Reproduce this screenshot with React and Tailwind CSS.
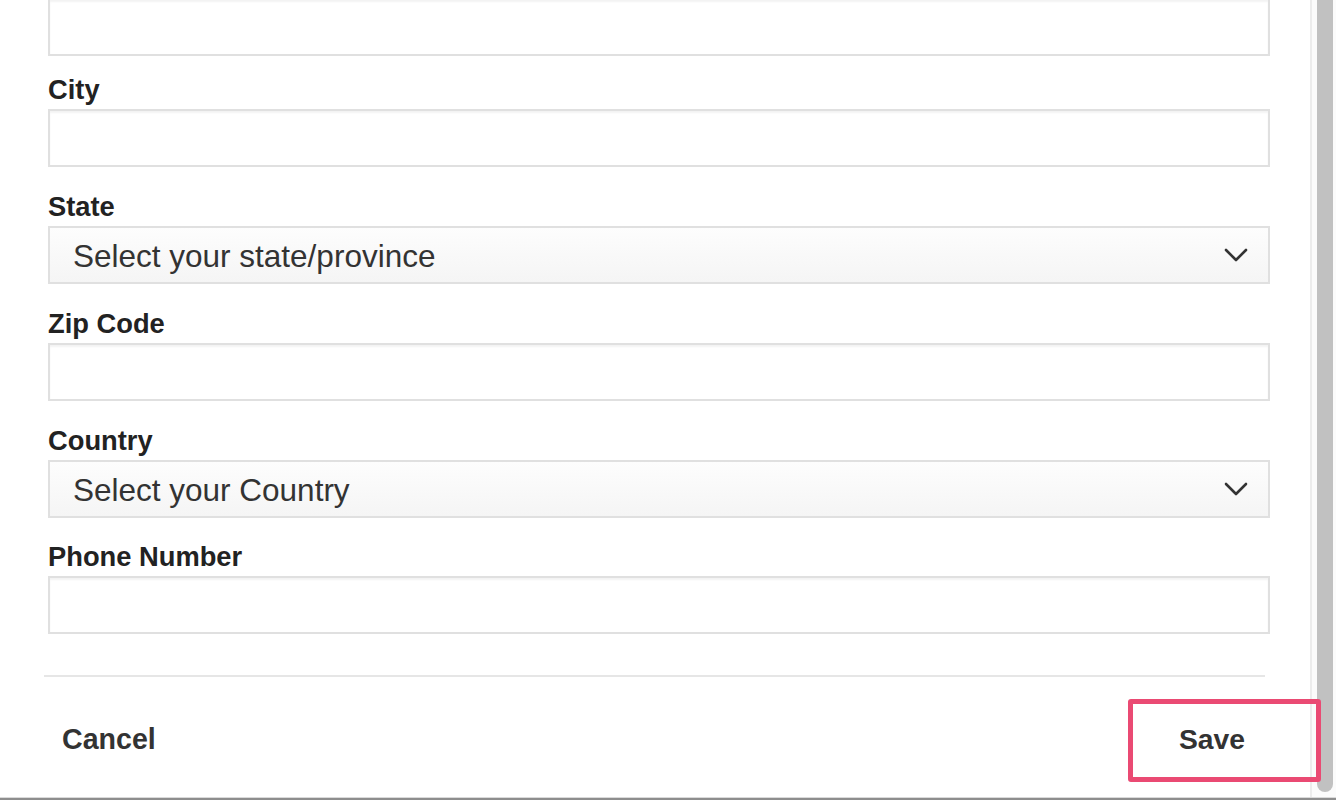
import React from "react";

const font = { fontFamily: '"Liberation Sans", Arial, Helvetica, sans-serif' };

function Label({ children }) {
  return (
    <div className="h-[34px] leading-[34px] text-[27.3px] font-bold text-[#222]">{children}</div>
  );
}

function Input({ className = "" }) {
  return (
    <div
      className={`h-[58px] w-[1222px] border-2 border-[#e0e0e0] bg-white shadow-[inset_0_2px_2px_rgba(0,0,0,0.05)] ${className}`}
    />
  );
}

function Select({ text, className = "" }) {
  return (
    <div
      className={`h-[58px] w-[1222px] border-2 border-[#e0e0e0] bg-gradient-to-b from-[#fdfdfd] to-[#f5f5f5] flex items-center justify-between pl-[23px] pr-[20px] ${className}`}
    >
      <span className="text-[31.5px] text-[#333] leading-none pt-[4px]">{text}</span>
      <svg width="24" height="14" viewBox="0 0 24 14" fill="none">
        <polyline points="2,2 12,12 22,2" stroke="#333" strokeWidth="2.6" strokeLinecap="round" strokeLinejoin="round" />
      </svg>
    </div>
  );
}

function Field({ label, children, gap = "mt-[23px]" }) {
  return (
    <div className={`flex flex-col ${gap}`}>
      <Label>{label}</Label>
      <div className="mt-[2px]">{children}</div>
    </div>
  );
}

export default function App() {
  return (
    <div className="w-[1336px] h-[800px] overflow-hidden bg-white flex flex-col relative" style={font}>
      <div className="flex flex-1 min-h-0">
        <div className="w-[1310px] flex flex-col">
          <div className="pl-[48px] flex flex-col">
            <Input className="mt-[-2px]" />
            <Field label="City" gap="mt-[17px]">
              <Input />
            </Field>
            <Field label="State">
              <Select text="Select your state/province" />
            </Field>
            <Field label="Zip Code">
              <Input />
            </Field>
            <Field label="Country">
              <Select text="Select your Country" />
            </Field>
            <Field label="Phone Number" gap="mt-[22px]">
              <Input />
            </Field>
          </div>
          <div className="ml-[44px] w-[1221px] mt-[41px] h-[2px] bg-[#e6e6e6]" />
          <div className="ml-[44px] w-[1221px] flex-1 flex items-center justify-between pt-[4px]">
            <button className="px-[18px] text-[28.6px] font-bold text-[#333] leading-none">Cancel</button>
            <button className="px-[20px] text-[28.3px] font-bold text-[#333] leading-none">Save</button>
          </div>
        </div>
        <div className="w-[26px] border-l-2 border-[#ececec] bg-[#fbfbfb] flex">
          <div className="ml-[5px] w-[16px] h-[792px] bg-[#c1c1c1] rounded-b-[8px]" />
        </div>
      </div>
      <div className="h-[1px] bg-[#dadada]" />
      <div className="h-[2px] bg-[#8e8e8e]" />
      <div className="absolute left-[1128px] top-[699px] w-[193px] h-[83px] border-[5px] border-[#ea4a73] rounded-[3px]" />
    </div>
  );
}
